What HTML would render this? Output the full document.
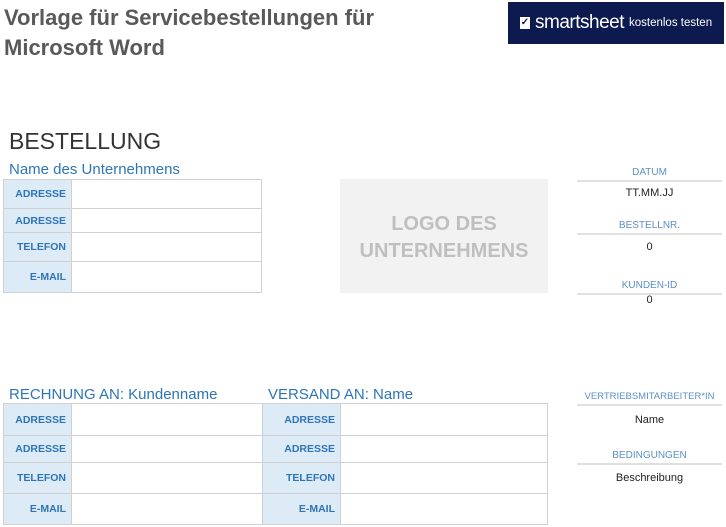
<!DOCTYPE html><html><head><meta charset="utf-8"><style>
*{margin:0;padding:0;box-sizing:border-box}
body{width:726px;height:527px;background:#fff;position:relative;font-family:"Liberation Sans",sans-serif;overflow:hidden}
.a{position:absolute}
.t{font-weight:bold;color:#595959;font-size:22px;left:4px}
.lbl{position:absolute;background:#ddebf7;color:#2e75b6;font-weight:bold;font-size:10.5px;text-align:right;padding-right:5px;display:flex;align-items:center;justify-content:flex-end;border:1px solid #d0d0d0}
.val{position:absolute;border:1px solid #d0d0d0;background:#fff}
.hd{position:absolute;color:#2e75b6;font-size:15px}
.rh{position:absolute;left:577px;width:145px;text-align:center;color:#5b8fc7;font-size:10px;border-bottom:2px solid #e0e0e0;padding-bottom:2px}
.rv{position:absolute;left:577px;width:145px;text-align:center;color:#222;font-size:11px}
</style></head><body>
<div class="a t" style="top:5px">Vorlage für Servicebestellungen für</div>
<div class="a t" style="top:35px">Microsoft Word</div>
<div class="a" style="left:508px;top:2px;width:216px;height:42px;background:#0d1a4f;color:#fff;display:flex;align-items:center;padding-left:12px">
<span style="display:inline-block;width:10px;height:12px;background:#fff;color:#0d1a4f;font-size:10px;line-height:12px;text-align:center;font-weight:bold;margin-right:5px">✓</span>
<span style="font-size:19px;letter-spacing:-0.5px">smartsheet</span><span style="font-size:11.5px;margin-left:5px">kostenlos testen</span></div>
<div class="a" style="left:9px;top:128px;font-size:23px;color:#333">BESTELLUNG</div>
<div class="hd" style="left:9px;top:161px">Name des Unternehmens</div>
<div class="lbl" style="left:3px;top:179px;width:69px;height:30px">ADRESSE</div><div class="val" style="left:71px;top:179px;width:191px;height:30px"></div>
<div class="lbl" style="left:3px;top:208px;width:69px;height:25px">ADRESSE</div><div class="val" style="left:71px;top:208px;width:191px;height:25px"></div>
<div class="lbl" style="left:3px;top:232px;width:69px;height:30px">TELEFON</div><div class="val" style="left:71px;top:232px;width:191px;height:30px"></div>
<div class="lbl" style="left:3px;top:261px;width:69px;height:32px">E-MAIL</div><div class="val" style="left:71px;top:261px;width:191px;height:32px"></div>
<div class="a" style="left:340px;top:179px;width:208px;height:114px;background:#f2f2f2;color:#bfbfbf;font-weight:bold;font-size:20px;text-align:center;padding-top:32px;line-height:27px">LOGO DES<br>UNTERNEHMENS</div>
<div class="rh" style="top:167px">DATUM</div><div class="rv" style="top:187px">TT.MM.JJ</div>
<div class="rh" style="top:220px">BESTELLNR.</div><div class="rv" style="top:241px">0</div>
<div class="rh" style="top:280px">KUNDEN-ID</div><div class="rv" style="top:294px">0</div>
<div class="hd" style="left:9px;top:386px">RECHNUNG AN: Kundenname</div>
<div class="hd" style="left:268px;top:386px">VERSAND AN: Name</div>
<div class="lbl" style="left:3px;top:403px;width:69px;height:33px">ADRESSE</div><div class="val" style="left:71px;top:403px;width:192px;height:33px"></div>
<div class="lbl" style="left:262px;top:403px;width:79px;height:33px">ADRESSE</div><div class="val" style="left:340px;top:403px;width:208px;height:33px"></div>
<div class="lbl" style="left:3px;top:435px;width:69px;height:28px">ADRESSE</div><div class="val" style="left:71px;top:435px;width:192px;height:28px"></div>
<div class="lbl" style="left:262px;top:435px;width:79px;height:28px">ADRESSE</div><div class="val" style="left:340px;top:435px;width:208px;height:28px"></div>
<div class="lbl" style="left:3px;top:462px;width:69px;height:32px">TELEFON</div><div class="val" style="left:71px;top:462px;width:192px;height:32px"></div>
<div class="lbl" style="left:262px;top:462px;width:79px;height:32px">TELEFON</div><div class="val" style="left:340px;top:462px;width:208px;height:32px"></div>
<div class="lbl" style="left:3px;top:493px;width:69px;height:32px">E-MAIL</div><div class="val" style="left:71px;top:493px;width:192px;height:32px"></div>
<div class="lbl" style="left:262px;top:493px;width:79px;height:32px">E-MAIL</div><div class="val" style="left:340px;top:493px;width:208px;height:32px"></div>
<div class="rh" style="top:391px;font-size:9.5px">VERTRIEBSMITARBEITER*IN</div><div class="rv" style="top:414px">Name</div>
<div class="rh" style="top:450px">BEDINGUNGEN</div><div class="rv" style="top:472px">Beschreibung</div>
</body></html>
